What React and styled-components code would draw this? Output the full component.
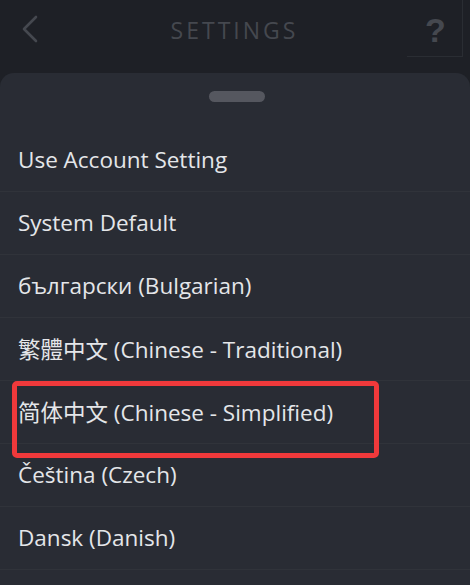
import React from 'react'
import styled, { createGlobalStyle } from 'styled-components'

const Global = createGlobalStyle`
  html, body {
    margin: 0;
    padding: 0;
    background: #1e2026;
    height: 100%;
    overflow: hidden;
  }
  * { box-sizing: border-box; }
`

const languages = [
  'Use Account Setting',
  'System Default',
  'български (Bulgarian)',
  '繁體中文 (Chinese - Traditional)',
  '简体中文 (Chinese - Simplified)',
  'Čeština (Czech)',
  'Dansk (Danish)',
]

function App() {
  return (
    <>
      <Global />
      <Page>
        <Header>
          <BackButton>
            <svg width="18" height="28" viewBox="0 0 18 28">
              <path d="M15 2 L3 14 L15 26" fill="none" stroke="#45484f" strokeWidth="2.6" strokeLinecap="round" strokeLinejoin="round" />
            </svg>
          </BackButton>
          <Title>SETTINGS</Title>
          <HelpButton>?</HelpButton>
        </Header>
        <Sheet>
          <HandleArea>
            <Handle />
          </HandleArea>
          <List>
            {languages.map((lang, i) => (
              <Row key={lang}>
                <Label lang={i === 3 ? 'zh-TW' : i === 4 ? 'zh-CN' : undefined}>{lang}</Label>
                {i === 4 && <Marker />}
              </Row>
            ))}
          </List>
        </Sheet>
      </Page>
    </>
  )
}

export default App

const Page = styled.div`
  width: 470px;
  height: 585px;
  display: flex;
  flex-direction: column;
  background: #1e2026;
  overflow: hidden;
  font-family: "Open Sans", "Noto Sans", "Noto Sans CJK SC", sans-serif;
`

const Header = styled.div`
  height: 73px;
  flex-shrink: 0;
  display: flex;
  align-items: flex-start;
`

const BackButton = styled.div`
  width: 60px;
  height: 58px;
  display: flex;
  align-items: center;
  padding-left: 21px;
`

const Title = styled.div`
  flex: 1;
  text-align: center;
  color: #45484f;
  font-size: 23px;
  letter-spacing: 3px;
  line-height: 60px;
  padding-left: 2px;
`

const HelpButton = styled.div`
  width: 56px;
  height: 57px;
  margin-right: 7px;
  border-right: 1px solid #2a2d33;
  border-bottom: 1px solid #2a2d33;
  color: #45484f;
  font-family: "Liberation Sans", sans-serif;
  font-weight: 700;
  font-size: 34px;
  display: flex;
  align-items: center;
  justify-content: center;
  padding-left: 2px;
  padding-top: 4px;
`

const Sheet = styled.div`
  flex: 1;
  min-height: 0;
  background: #292c34;
  border-radius: 14px 14px 0 0;
  display: flex;
  flex-direction: column;
`

const HandleArea = styled.div`
  height: 56px;
  flex-shrink: 0;
  display: flex;
  justify-content: center;
  padding-top: 18px;
`

const Handle = styled.div`
  width: 56px;
  height: 11px;
  border-radius: 6px;
  background: #55575f;
  margin-left: 4px;
`

const List = styled.div`
  display: flex;
  flex-direction: column;
`

const Row = styled.div`
  height: 63px;
  flex-shrink: 0;
  display: flex;
  align-items: center;
  padding-left: 18px;
  padding-bottom: 1px;
  border-bottom: 1px solid #30333a;
  position: relative;
`

const Label = styled.span`
  color: #e4e6e9;
  font-size: 22.5px;
  font-family: ${p => p.lang === 'zh-TW'
    ? '"Open Sans", "Noto Sans CJK TC", sans-serif'
    : '"Open Sans", "Noto Sans CJK SC", sans-serif'};
`

const Marker = styled.div`
  position: absolute;
  left: 12px;
  top: 0;
  width: 367px;
  height: 77px;
  border: 5px solid #f0393b;
  border-radius: 5px;
  pointer-events: none;
`
